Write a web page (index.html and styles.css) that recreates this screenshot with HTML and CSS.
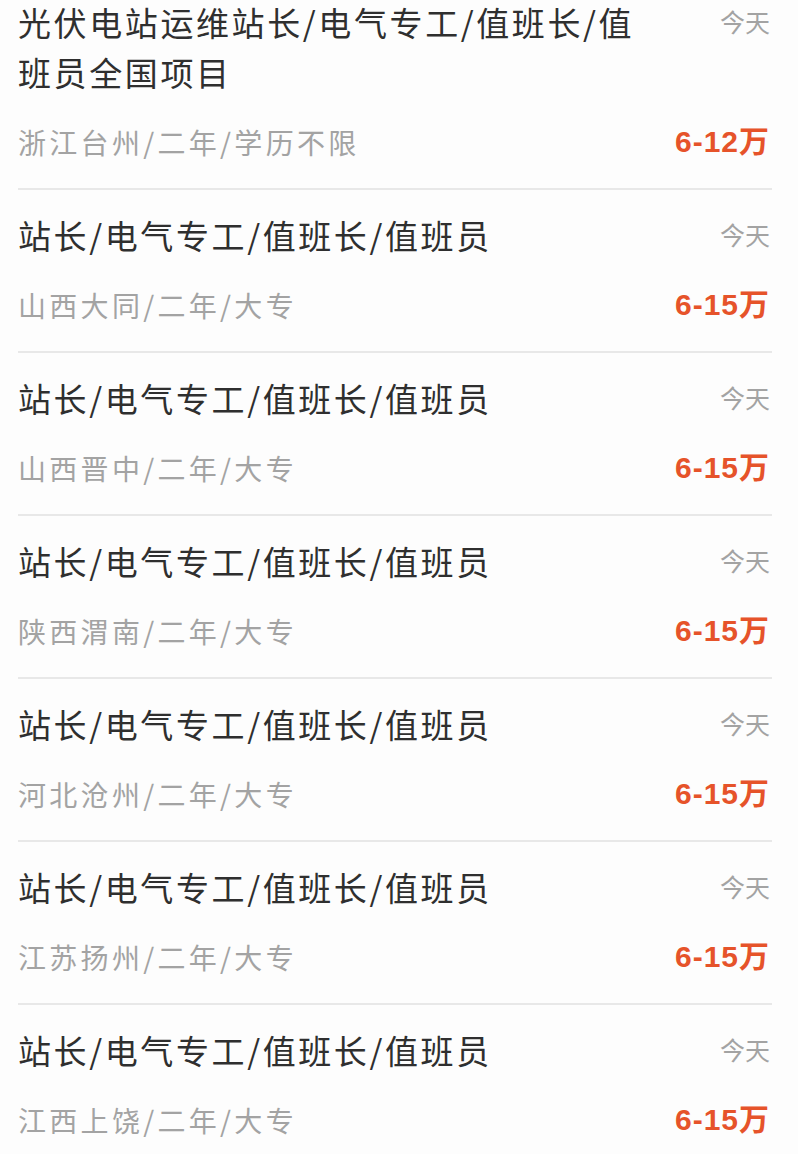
FILE: index.html
```html
<!DOCTYPE html>
<html lang="zh-CN">
<head>
<meta charset="utf-8">
<title>职位列表</title>
<link rel="stylesheet" href="styles.css">
</head>
<body>
<ul class="job-list">
  <li class="job">
    <div class="job-title">光伏电站运维站长/电气专工/值班长/值班员全国项目</div>
    <div class="job-date">今天</div>
    <div class="job-meta">浙江台州/二年/学历不限</div>
    <div class="job-salary">6-12万</div>
  </li>
  <li class="job">
    <div class="job-title">站长/电气专工/值班长/值班员</div>
    <div class="job-date">今天</div>
    <div class="job-meta">山西大同/二年/大专</div>
    <div class="job-salary">6-15万</div>
  </li>
  <li class="job">
    <div class="job-title">站长/电气专工/值班长/值班员</div>
    <div class="job-date">今天</div>
    <div class="job-meta">山西晋中/二年/大专</div>
    <div class="job-salary">6-15万</div>
  </li>
  <li class="job">
    <div class="job-title">站长/电气专工/值班长/值班员</div>
    <div class="job-date">今天</div>
    <div class="job-meta">陕西渭南/二年/大专</div>
    <div class="job-salary">6-15万</div>
  </li>
  <li class="job">
    <div class="job-title">站长/电气专工/值班长/值班员</div>
    <div class="job-date">今天</div>
    <div class="job-meta">河北沧州/二年/大专</div>
    <div class="job-salary">6-15万</div>
  </li>
  <li class="job">
    <div class="job-title">站长/电气专工/值班长/值班员</div>
    <div class="job-date">今天</div>
    <div class="job-meta">江苏扬州/二年/大专</div>
    <div class="job-salary">6-15万</div>
  </li>
  <li class="job">
    <div class="job-title">站长/电气专工/值班长/值班员</div>
    <div class="job-date">今天</div>
    <div class="job-meta">江西上饶/二年/大专</div>
    <div class="job-salary">6-15万</div>
  </li>
</ul>
</body>
</html>
```
FILE: styles.css
```css
html, body {
  margin: 0;
  padding: 0;
  background: #fdfdfd;
}

body {
  font-family: "Noto Sans CJK SC", "Noto Sans", sans-serif;
}

.job-list {
  list-style: none;
  margin: -3px 26px 0 18px;
  padding: 0;
}

.job {
  display: grid;
  grid-template-columns: 1fr auto;
  column-gap: 30px;
  padding: 20px 2px 26px 0;
  border-bottom: 2px solid #e8e8e8;
}

.job:first-child {
  padding-top: 0;
}

.job-title {
  grid-column: 1;
  grid-row: 1;
  font-size: 33px;
  line-height: 50px;
  color: #2f2f2f;
  letter-spacing: 2.6px;
}

.job-date {
  grid-column: 2;
  grid-row: 1;
  align-self: start;
  font-size: 25px;
  line-height: 48px;
  color: #a3a3a3;
  text-align: right;
}

.job-meta {
  grid-column: 1;
  grid-row: 2;
  margin-top: 25px;
  font-size: 28px;
  line-height: 40px;
  color: #a3a3a3;
  letter-spacing: 3.3px;
}

.job-salary {
  grid-column: 2;
  grid-row: 2;
  margin-top: 25px;
  font-family: "Liberation Sans", "Noto Sans CJK SC", sans-serif;
  font-size: 30px;
  font-weight: bold;
  line-height: 40px;
  letter-spacing: 1px;
  color: #e6532a;
  text-align: right;
}
```
